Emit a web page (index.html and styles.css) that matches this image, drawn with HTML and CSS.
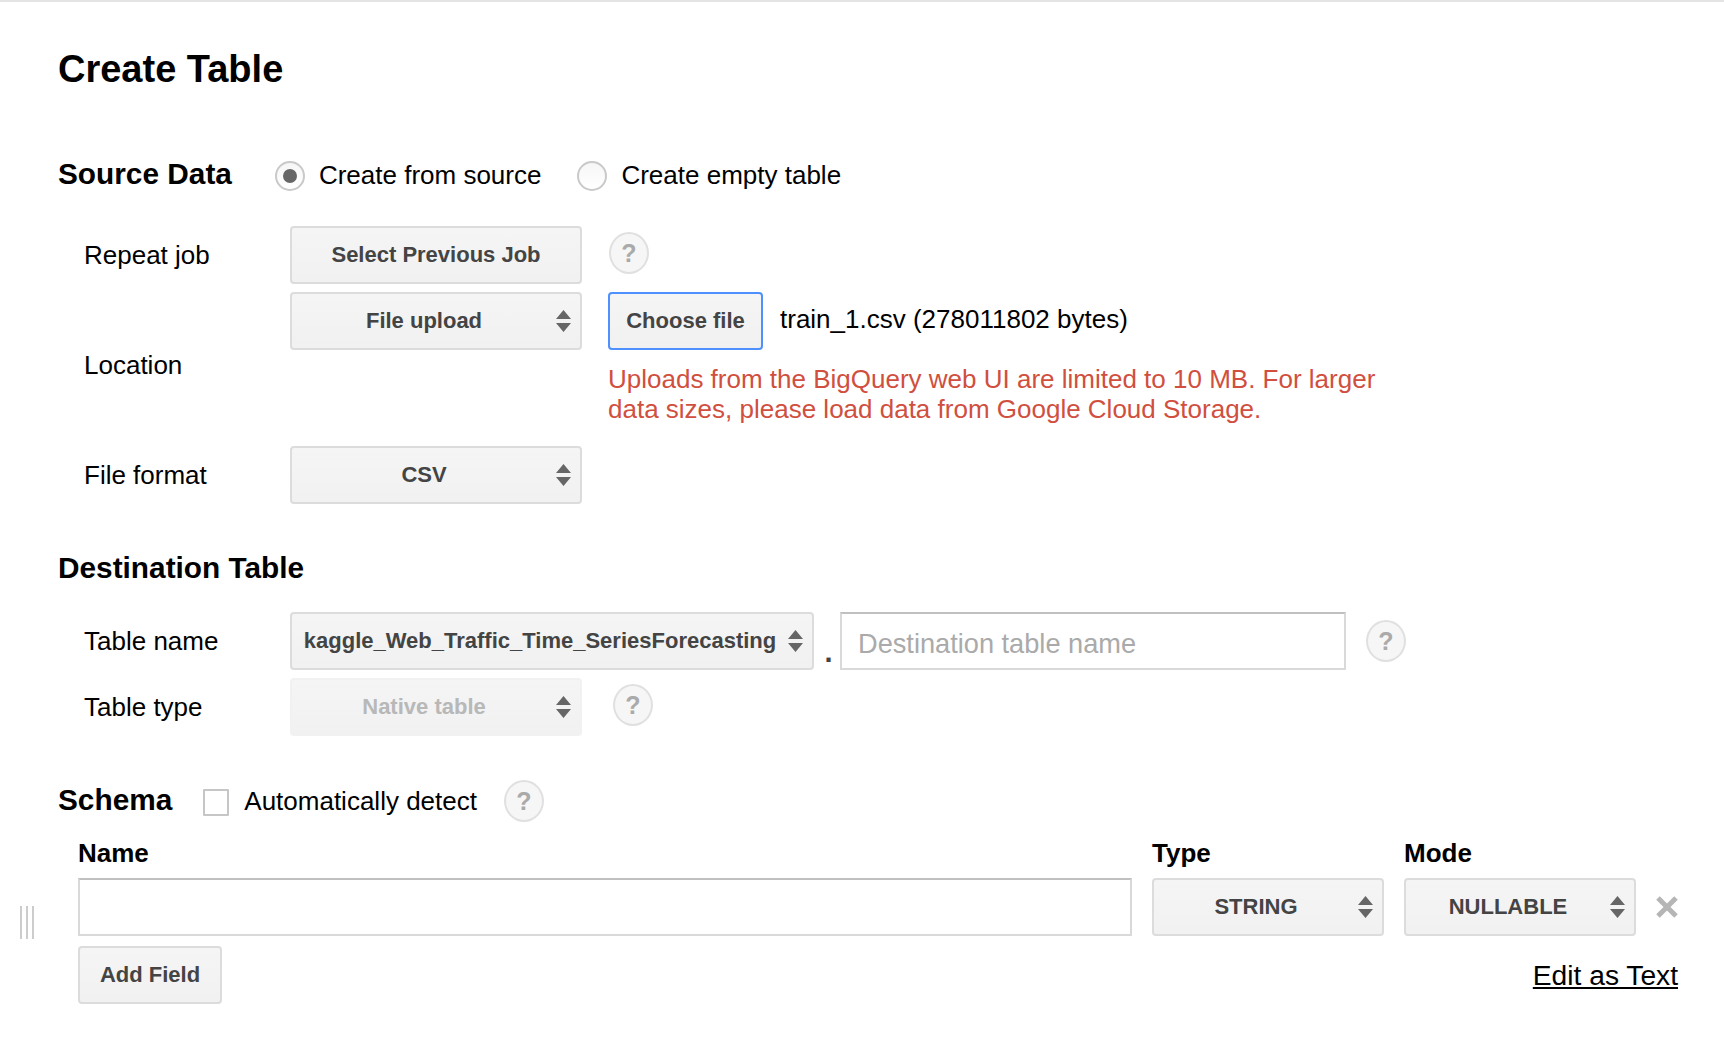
FILE: index.html
```html
<!DOCTYPE html>
<html lang="en">
<head>
<meta charset="utf-8">
<title>Create Table</title>
<link rel="stylesheet" href="styles.css">
</head>
<body>
<main class="page">
  <h1 class="title">Create Table</h1>

  <section class="head source-head">
    <h2 class="section-title">Source Data</h2>
    <label class="radio-item first"><span class="radio on"></span>Create from source</label>
    <label class="radio-item second"><span class="radio"></span>Create empty table</label>
  </section>

  <section class="form source-form">
    <div class="label">Repeat job</div>
    <div class="controls">
      <button class="btn field">Select Previous Job</button>
      <span class="help help-a">?</span>
    </div>
    <div class="label">Location</div>
    <div class="location">
      <button class="btn field select"><span class="sel-text">File upload</span><svg class="arrows" viewBox="0 0 15 22"><path d="M7.5 0L15 9H0zM7.5 22L0 13h15z"/></svg></button>
      <div class="upload">
        <div class="file-line">
          <button class="btn choose">Choose file</button>
          <span class="file-name">train_1.csv (278011802 bytes)</span>
        </div>
        <p class="error">Uploads from the BigQuery web UI are limited to 10 MB. For larger<br>data sizes, please load data from Google Cloud Storage.</p>
      </div>
    </div>
    <div class="label">File format</div>
    <div class="controls">
      <button class="btn field select"><span class="sel-text">CSV</span><svg class="arrows" viewBox="0 0 15 22"><path d="M7.5 0L15 9H0zM7.5 22L0 13h15z"/></svg></button>
    </div>
  </section>

  <h2 class="section-title dest-title">Destination Table</h2>

  <section class="form dest-form">
    <div class="label">Table name</div>
    <div class="controls">
      <button class="btn field-wide select"><span class="sel-text">kaggle_Web_Traffic_Time_SeriesForecasting</span><svg class="arrows" viewBox="0 0 15 22"><path d="M7.5 0L15 9H0zM7.5 22L0 13h15z"/></svg></button>
      <span class="dot">.</span>
      <input class="text-input dest-input" type="text" placeholder="Destination table name">
      <span class="help help-b">?</span>
    </div>
    <div class="label">Table type</div>
    <div class="controls">
      <button class="btn field select disabled"><span class="sel-text">Native table</span><svg class="arrows" viewBox="0 0 15 22"><path d="M7.5 0L15 9H0zM7.5 22L0 13h15z"/></svg></button>
      <span class="help help-c">?</span>
    </div>
  </section>

  <section class="head schema-head">
    <h2 class="section-title">Schema</h2>
    <label class="check-item"><span class="checkbox"></span>Automatically detect</label>
    <span class="help help-d">?</span>
  </section>

  <section class="schema">
    <div class="col-head col-name">Name</div>
    <div class="col-head col-type">Type</div>
    <div class="col-head col-mode">Mode</div>
    <div></div>
    <div class="schema-row">
      <span class="grip"></span>
      <input class="text-input name-input" type="text">
    </div>
    <button class="btn select"><span class="sel-text">STRING</span><svg class="arrows" viewBox="0 0 15 22"><path d="M7.5 0L15 9H0zM7.5 22L0 13h15z"/></svg></button>
    <button class="btn select"><span class="sel-text">NULLABLE</span><svg class="arrows" viewBox="0 0 15 22"><path d="M7.5 0L15 9H0zM7.5 22L0 13h15z"/></svg></button>
    <svg class="remove" viewBox="0 0 22 22"><path d="M2 2L20 20M20 2L2 20"/></svg>
  </section>

  <div class="foot">
    <button class="btn add">Add Field</button>
    <a class="edit-link" href="#">Edit as Text</a>
  </div>
</main>
</body>
</html>
```

FILE: styles.css
```css
* { box-sizing: border-box; }
html, body { margin: 0; padding: 0; background: #fff; }
body { height: 1038px; overflow: hidden; font-family: "Liberation Sans", Arial, sans-serif; color: #000; }

.page { border-top: 2px solid #e4e4e4; padding: 0 46px 0 58px; height: 100%; font-size: 26px; }

.title { margin: 0; padding-top: 46px; height: 127px; font-size: 38px; line-height: 42px; font-weight: 700; }

.head { display: flex; align-items: center; }
.source-head { height: 60px; margin-top: 15px; }
.section-title { margin: 0; font-size: 29.8px; line-height: 34px; font-weight: 700; }

.radio-item { display: flex; align-items: center; margin-top: 2px; }
.radio-item.first { margin-left: 43px; }
.radio-item.second { margin-left: 36px; }
.radio { width: 30px; height: 30px; margin: 2px 14px 0 0; border: 2px solid #c9c9c9; border-radius: 50%; background: linear-gradient(#f6f6f6, #fff); display: flex; align-items: center; justify-content: center; }
.radio.on::after { content: ""; width: 14px; height: 14px; border-radius: 50%; background: #666; }

.form { display: grid; grid-template-columns: 206px 1fr; row-gap: 8px; margin-left: 26px; }
.source-form { margin-top: 22px; }
.label { align-self: center; line-height: 30px; }
.controls { display: flex; align-items: center; }
.location { display: flex; align-items: flex-start; }
.upload { margin-left: 26px; }
.file-line { display: flex; align-items: center; }
.file-name { margin-left: 17px; padding-bottom: 4px; }
.error { margin: 14px 0 14px; color: #d04f3e; font-size: 26px; line-height: 30px; white-space: nowrap; }

.btn { display: flex; align-items: center; justify-content: center; height: 58px; padding: 0; border: 2px solid #dcdcdc; border-radius: 4px; background: linear-gradient(#f5f5f5, #f1f1f1); color: #444; font-family: inherit; font-size: 22px; font-weight: 700; }
.field { width: 292px; flex: none; }
.field-wide { width: 524px; flex: none; }
.choose { width: 155px; border-color: #4d90fe; }
.select { padding-right: 9px; }
.sel-text { flex: 1; text-align: center; white-space: nowrap; }
.arrows { width: 15px; height: 22px; flex: none; fill: #666; }
.disabled { border-color: #f1f1f1; color: #b8b8b8; }

.help { display: flex; align-items: center; justify-content: center; flex: none; width: 40px; height: 42px; border: 2px solid #e0e0e0; border-radius: 50%; background: #f6f6f6; color: #aaa; font-size: 25px; font-weight: 700; }
.help-a { margin: -4px 0 0 27px; }
.help-b { margin: 0 0 0 20px; }
.help-c { margin: -4px 0 0 31px; }
.help-d { margin: 2px 0 0 27px; }

.dest-title { margin-top: 47px; }
.dest-form { margin-top: 27px; }
.dot { width: 26px; padding-left: 3px; text-align: center; font-size: 29px; font-weight: 700; align-self: flex-end; color: #444; line-height: 30px; padding-bottom: 3px; }
.text-input { height: 58px; border: 2px solid #d9d9d9; border-top-color: #c0c0c0; background: #fff; padding: 5px 16px 0; font-family: inherit; font-size: 27.2px; color: #000; outline: none; border-radius: 0; }
.text-input::placeholder { color: #aaa; opacity: 1; }
.dest-input { width: 506px; }

.schema-head { margin-top: 43px; height: 42px; }
.check-item { display: flex; align-items: center; margin: 2px 0 0 31px; }
.checkbox { width: 26px; height: 27px; margin: 2px 15px 0 0; border: 2px solid #c6c6c6; border-radius: 1px; background: #fff; }

.schema { display: grid; grid-template-columns: 1054px 232px 232px 22px; column-gap: 20px; margin: 17px 0 0 20px; align-items: center; }
.col-head { font-size: 26px; font-weight: 700; line-height: 30px; margin-bottom: 10px; }
.schema-row { position: relative; }
.grip { position: absolute; left: -58px; top: 28px; width: 14px; height: 33px; background: repeating-linear-gradient(90deg, #ccc 0 2px, #fff 2px 6px); }
.name-input { width: 100%; display: block; }
.remove { width: 22px; height: 22px; fill: none; stroke: #b5b5b5; stroke-width: 5; }

.foot { display: flex; justify-content: space-between; align-items: flex-start; margin: 10px 0 0 20px; }
.add { width: 144px; }
.edit-link { margin-top: 13px; font-size: 28.2px; line-height: 32px; color: #000; }
```
